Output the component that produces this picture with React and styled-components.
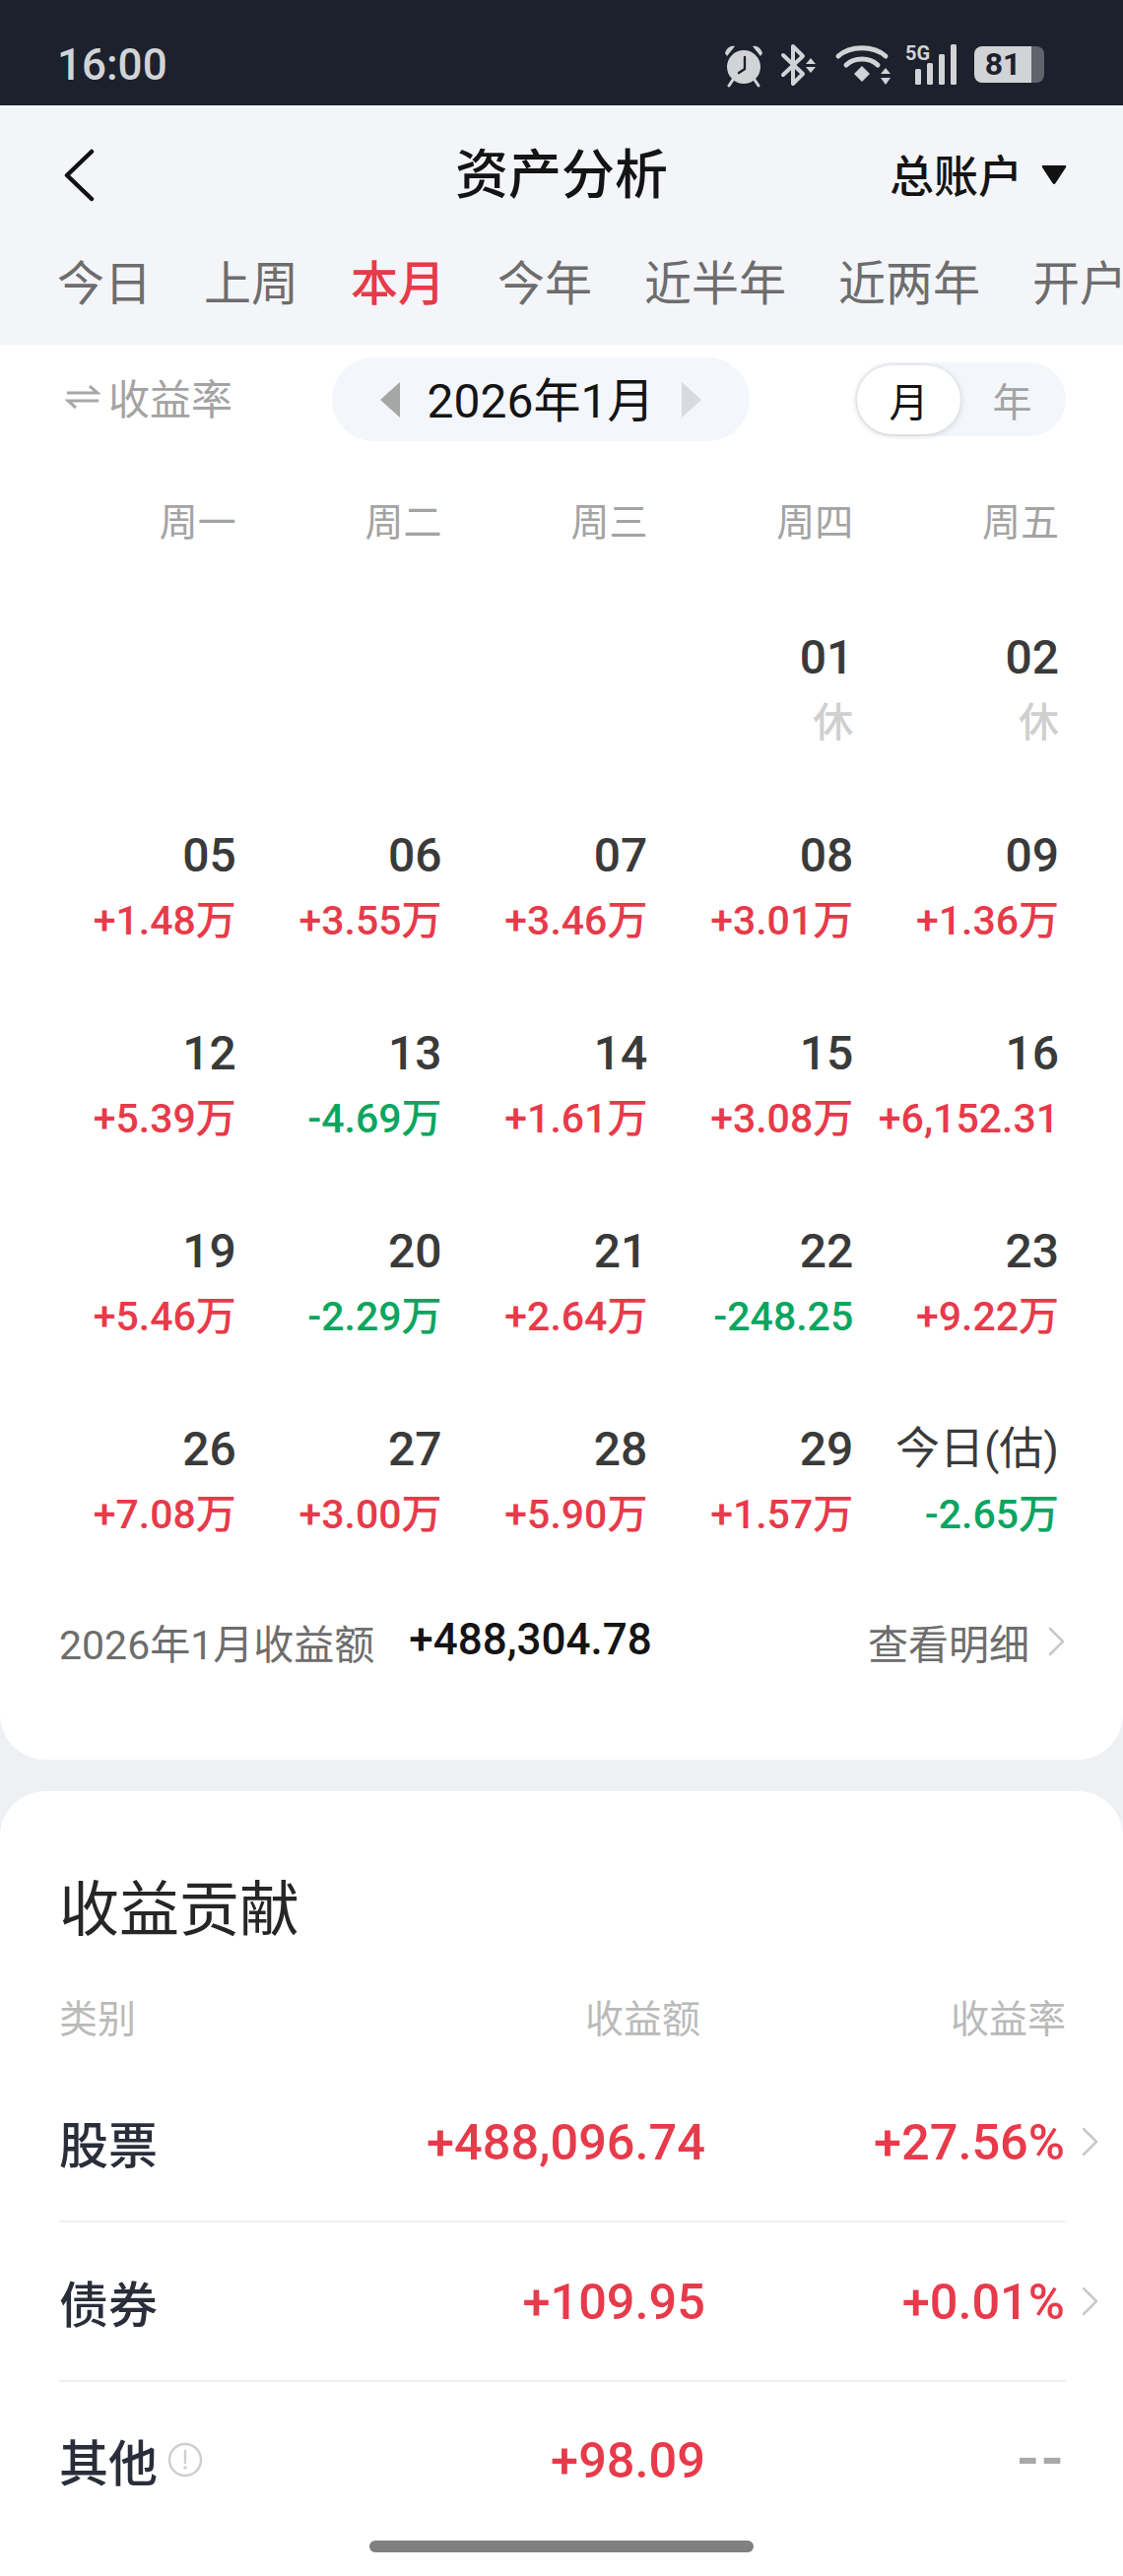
import React from 'react';
import styled, {createGlobalStyle} from 'styled-components';

const RED = '#e73a4a';
const GREEN = '#0ba560';

const GlobalStyle = createGlobalStyle`
  html, body {
    margin: 0;
    padding: 0;
    background: #eff0f4;
  }
  * {
    box-sizing: border-box;
  }
`;

const Page = styled.div`
  position: relative;
  width: 1140px;
  height: 2616px;
  overflow: hidden;
  background: #eff0f4;
  font-family: Roboto, "Noto Sans CJK SC", sans-serif;
`;

const StatusBar = styled.div`
  height: 107px;
  padding: 24px 80px 0 58px;
  background: #1c212d;
  display: flex;
  align-items: center;
  justify-content: space-between;
  color: #d2d3d6;
`;

const Clock = styled.div`
  font-size: 44px;
  font-weight: 500;
`;

const StatusIcons = styled.div`
  display: flex;
  align-items: center;
  gap: 16px;
  svg {
    display: block;
    overflow: visible;
  }
`;

const Battery = styled.div`
  display: flex;
  align-items: center;
  margin-left: 2px;
`;

const BatteryLevel = styled.div`
  width: 58px;
  height: 37px;
  border-radius: 8px 0 0 8px;
  background: #d2d3d6;
  color: #1c212d;
  font-size: 32px;
  font-weight: 700;
  line-height: 37px;
  text-align: center;
`;

const BatteryRest = styled.div`
  width: 13px;
  height: 37px;
  border-radius: 0 8px 8px 0;
  background: #60636b;
`;

const NavArea = styled.div`
  height: 243px;
  background: #f4f5f9;
`;

const TitleBar = styled.div`
  height: 142px;
  position: relative;
  display: flex;
  align-items: center;
  justify-content: space-between;
  padding: 0 56px 0 64px;
`;

const Title = styled.div`
  position: absolute;
  left: 0;
  right: 0;
  top: 32px;
  text-align: center;
  font-size: 54px;
  line-height: 80px;
  font-weight: 500;
  color: #141414;
`;

const Account = styled.div`
  display: flex;
  align-items: center;
  gap: 18px;
  margin-top: -3px;
  font-size: 45px;
  font-weight: 500;
  color: #141414;
`;

const Tabs = styled.div`
  display: flex;
  gap: 53px;
  padding: 2px 0 0 58px;
  white-space: nowrap;
  overflow: hidden;
`;

const Tab = styled.div`
  font-size: 48px;
  line-height: 76px;
  font-weight: ${props => (props.$active ? 500 : 400)};
  color: ${props => (props.$active ? RED : '#6d6d6d')};
`;

const Card = styled.div`
  background: #fff;
  border-radius: 0 0 46px 46px;
  height: 1437px;
`;

const SwitchRow = styled.div`
  display: grid;
  grid-template-columns: 271px 424px 1fr;
  align-items: center;
  padding: 13px 58px 0 66px;
`;

const RateSwitch = styled.div`
  display: flex;
  align-items: center;
  gap: 8px;
  margin-top: -6px;
  font-size: 42px;
  color: #a3a3a3;
`;

const MonthPill = styled.div`
  height: 85px;
  border-radius: 43px;
  background: #f3f6fa;
  display: flex;
  align-items: center;
  justify-content: space-between;
  padding: 0 48px;
  color: #141414;
`;

const MonthText = styled.span`
  margin-top: -6px;
  font-size: 48px;
  font-weight: 400;
`;

const Segment = styled.div`
  justify-self: end;
  width: 214px;
  height: 75px;
  border-radius: 38px;
  background: #f3f6fa;
  display: flex;
  align-items: center;
  padding: 0 2px;
`;

const SegmentItem = styled.div`
  width: 105px;
  height: 70px;
  border-radius: 35px;
  display: flex;
  align-items: center;
  justify-content: center;
  font-size: 40px;
  color: ${props => (props.$active ? '#141414' : '#a3a3a3')};
  background: ${props => (props.$active ? '#fff' : 'transparent')};
  box-shadow: ${props => (props.$active ? '0 1px 6px rgba(0, 0, 0, 0.18)' : 'none')};
`;

const Calendar = styled.div`
  display: grid;
  grid-template-columns: repeat(5, 1fr);
  padding: 0 65px 0 31px;
`;

const WeekLabel = styled.div`
  height: 186px;
  padding-top: 55px;
  text-align: right;
  font-size: 39px;
  line-height: 56px;
  color: #a3a3a3;
`;

const DayCell = styled.div`
  height: 201px;
  text-align: right;
  white-space: nowrap;
`;

const DayNumber = styled.div`
  font-size: ${props => (props.$today ? '45px' : '48px')};
  line-height: 68px;
  font-weight: ${props => (props.$today ? 400 : 500)};
  color: #3a3a3a;
`;

const DayValue = styled.div`
  margin-top: 0;
  font-size: 41px;
  line-height: 64px;
  font-weight: 500;
  color: ${props => props.$color};
`;

const Summary = styled.div`
  display: flex;
  align-items: center;
  padding: 0 58px 0 60px;
  margin-top: -2px;
  height: 60px;
`;

const SummaryLabel = styled.div`
  font-size: 41px;
  color: #6d6d6d;
`;

const SummaryValue = styled.div`
  margin-left: 35px;
  margin-top: -5px;
  font-size: 44px;
  font-weight: 500;
  color: #141414;
`;

const SummaryLink = styled.div`
  margin-left: auto;
  display: flex;
  align-items: center;
  gap: 19px;
  font-size: 41px;
  color: #6d6d6d;
`;

const ContributionCard = styled.div`
  margin-top: 32px;
  height: 797px;
  padding: 0 58px 0 60px;
  background: #fff;
  border-radius: 46px 46px 0 0;
`;

const SectionTitle = styled.div`
  padding: 77px 0 15px;
  font-size: 61px;
  line-height: 88px;
  color: #262626;
`;

const TableRow = styled.div`
  display: grid;
  grid-template-columns: 1fr 400px 365px;
  align-items: center;
  height: ${props => props.$height}px;
  border-bottom: ${props => (props.$line ? '2px solid #f0f0f2' : 'none')};
`;

const HeadCell = styled.div`
  font-size: 39px;
  color: #bababa;
  text-align: ${props => (props.$left ? 'left' : 'right')};
  padding-right: ${props => (props.$inset ? '6px' : '0')};
`;

const RowName = styled.div`
  display: flex;
  align-items: center;
  gap: 10px;
  font-size: 50px;
  font-weight: 500;
  color: #2a2e3b;
`;

const Amount = styled.div`
  position: relative;
  padding-right: 1px;
  text-align: right;
  font-size: 50.5px;
  font-weight: 500;
  color: ${RED};
`;

const NoRate = styled.div`
  text-align: right;
  font-size: 64px;
  line-height: 60px;
  letter-spacing: 3px;
  font-weight: 500;
  color: #a8a8a8;
`;

const RowChevron = styled.span`
  position: absolute;
  right: -34px;
  top: 50%;
  margin-top: -15px;
  line-height: 0;
`;

const HomeBar = styled.div`
  position: absolute;
  left: 375px;
  bottom: 24px;
  width: 390px;
  height: 12px;
  border-radius: 6px;
  background: #808080;
`;

const AlarmIcon = () => (
  <svg width="42" height="42" viewBox="0 0 42 42">
    <circle cx="20" cy="23" r="17" fill="#d2d3d6" />
    <path d="M1 9 C3 3 7 1 11 2 L3 12 Z M39 9 C37 3 33 1 29 2 L37 12 Z" fill="#d2d3d6" />
    <path d="M9 36 L5 42 M31 36 L35 42" stroke="#d2d3d6" strokeWidth="3" strokeLinecap="round" />
    <path d="M21 13 L21 25 L15 29" stroke="#1c212d" strokeWidth="2.4" fill="none" strokeLinecap="round" />
  </svg>
);

const BluetoothIcon = () => (
  <svg width="40" height="42" viewBox="0 0 40 42">
    <path
      d="M2 11 L22 30 L12 40 L12 2 L22 12 L2 31"
      stroke="#d2d3d6"
      strokeWidth="4"
      fill="none"
      strokeLinecap="round"
      strokeLinejoin="round"
    />
    <path d="M29 14 L34 20 L24 20 Z M29 29 L34 23 L24 23 Z" fill="#d2d3d6" transform="translate(1 0)" />
  </svg>
);

const WifiIcon = () => (
  <svg width="54" height="42" viewBox="0 0 54 42">
    <path d="M2 12 C14 1 38 1 50 12" stroke="#d2d3d6" strokeWidth="5" fill="none" strokeLinecap="round" />
    <path d="M10 21 C18 13 34 13 42 21" stroke="#d2d3d6" strokeWidth="5" fill="none" strokeLinecap="round" />
    <path d="M18 30 L26 22 L34 30 L26 38 Z" fill="#d2d3d6" />
    <path d="M50 24 L55 30 L45 30 Z M50 41 L55 34 L45 34 Z" fill="#d2d3d6" />
  </svg>
);

const SignalIcon = () => (
  <svg width="52" height="42" viewBox="0 0 52 42">
    <text x="0" y="16" fontSize="20" fontWeight="700" fontFamily="Roboto, sans-serif" fill="#d2d3d6">
      5G
    </text>
    <rect x="10" y="25" width="6" height="16" rx="1.5" fill="#d2d3d6" />
    <rect x="22" y="19" width="6" height="22" rx="1.5" fill="#d2d3d6" />
    <rect x="34" y="10" width="6" height="31" rx="1.5" fill="#d2d3d6" />
    <rect x="46" y="0" width="6" height="41" rx="1.5" fill="#d2d3d6" />
  </svg>
);

const BackIcon = () => (
  <svg width="32" height="54" viewBox="0 0 32 54">
    <path d="M29 3 L4 27 L29 51" stroke="#111" strokeWidth="4.5" fill="none" strokeLinecap="round" strokeLinejoin="round" />
  </svg>
);

const DownTriangle = () => (
  <svg width="28" height="22" viewBox="0 0 28 22">
    <path d="M3 2 H25 Q27 2 26 4 L15.5 20 Q14 22 12.5 20 L2 4 Q1 2 3 2 Z" fill="#111" />
  </svg>
);

const SwapIcon = () => (
  <svg width="36" height="28" viewBox="0 0 36 28">
    <path d="M2 10 H33 L25 3" stroke="#a8a8a8" strokeWidth="3" fill="none" />
    <path d="M34 18 H3 L11 25" stroke="#a8a8a8" strokeWidth="3" fill="none" />
  </svg>
);

const PillArrow = ({left}) => (
  <svg width="22" height="36" viewBox="0 0 22 36">
    {left ? <path d="M21 0 V36 L1 18 Z" fill="#a6a6a6" /> : <path d="M1 0 V36 L21 18 Z" fill="#d9dade" />}
  </svg>
);

const Chevron = () => (
  <svg width="18" height="30" viewBox="0 0 18 30">
    <path d="M2 2 L15 15 L2 28" stroke="#c8c8c8" strokeWidth="2.5" fill="none" strokeLinecap="round" strokeLinejoin="round" />
  </svg>
);

const InfoIcon = () => (
  <svg width="36" height="36" viewBox="0 0 36 36">
    <circle cx="18" cy="18" r="16" stroke="#cfcfcf" strokeWidth="2.5" fill="none" />
    <path d="M18 9 V21" stroke="#cfcfcf" strokeWidth="2.5" strokeLinecap="round" />
    <circle cx="18" cy="26" r="1.8" fill="#cfcfcf" />
  </svg>
);

const TABS = ['今日', '上周', '本月', '今年', '近半年', '近两年', '开户'];
const WEEK = ['周一', '周二', '周三', '周四', '周五'];

const DAYS = [
  [null, null],
  [null, null],
  [null, null],
  ['01', '休', '#cfcfcf'],
  ['02', '休', '#cfcfcf'],
  ['05', '+1.48万', RED],
  ['06', '+3.55万', RED],
  ['07', '+3.46万', RED],
  ['08', '+3.01万', RED],
  ['09', '+1.36万', RED],
  ['12', '+5.39万', RED],
  ['13', '-4.69万', GREEN],
  ['14', '+1.61万', RED],
  ['15', '+3.08万', RED],
  ['16', '+6,152.31', RED],
  ['19', '+5.46万', RED],
  ['20', '-2.29万', GREEN],
  ['21', '+2.64万', RED],
  ['22', '-248.25', GREEN],
  ['23', '+9.22万', RED],
  ['26', '+7.08万', RED],
  ['27', '+3.00万', RED],
  ['28', '+5.90万', RED],
  ['29', '+1.57万', RED],
  ['今日(估)', '-2.65万', GREEN]
];

const App = () => (
  <Page>
    <GlobalStyle />
    <StatusBar>
      <Clock>16:00</Clock>
      <StatusIcons>
        <AlarmIcon />
        <BluetoothIcon />
        <WifiIcon />
        <SignalIcon />
        <Battery>
          <BatteryLevel>81</BatteryLevel>
          <BatteryRest />
        </Battery>
      </StatusIcons>
    </StatusBar>

    <NavArea>
      <TitleBar>
        <BackIcon />
        <Title>资产分析</Title>
        <Account>
          总账户
          <DownTriangle />
        </Account>
      </TitleBar>
      <Tabs>
        {TABS.map(tab => (
          <Tab key={tab} $active={tab === '本月'}>
            {tab}
          </Tab>
        ))}
      </Tabs>
    </NavArea>

    <Card>
      <SwitchRow>
        <RateSwitch>
          <SwapIcon />
          收益率
        </RateSwitch>
        <MonthPill>
          <PillArrow left />
          <MonthText>2026年1月</MonthText>
          <PillArrow />
        </MonthPill>
        <Segment>
          <SegmentItem $active>月</SegmentItem>
          <SegmentItem>年</SegmentItem>
        </Segment>
      </SwitchRow>

      <Calendar>
        {WEEK.map(day => (
          <WeekLabel key={day}>{day}</WeekLabel>
        ))}
        {DAYS.map(([day, value, color], i) => (
          <DayCell key={i}>
            {day && <DayNumber $today={day.length > 2}>{day}</DayNumber>}
            {value && <DayValue $color={color}>{value}</DayValue>}
          </DayCell>
        ))}
      </Calendar>

      <Summary>
        <SummaryLabel>2026年1月收益额</SummaryLabel>
        <SummaryValue>+488,304.78</SummaryValue>
        <SummaryLink>
          查看明细
          <Chevron />
        </SummaryLink>
      </Summary>
    </Card>

    <ContributionCard>
      <SectionTitle>收益贡献</SectionTitle>
      <TableRow $height={96}>
        <HeadCell $left>类别</HeadCell>
        <HeadCell $inset>收益额</HeadCell>
        <HeadCell>收益率</HeadCell>
      </TableRow>
      <TableRow $height={162} $line>
        <RowName>股票</RowName>
        <Amount>+488,096.74</Amount>
        <Amount>
          +27.56%
          <RowChevron>
            <Chevron />
          </RowChevron>
        </Amount>
      </TableRow>
      <TableRow $height={162} $line>
        <RowName>债券</RowName>
        <Amount>+109.95</Amount>
        <Amount>
          +0.01%
          <RowChevron>
            <Chevron />
          </RowChevron>
        </Amount>
      </TableRow>
      <TableRow $height={158}>
        <RowName>
          其他
          <InfoIcon />
        </RowName>
        <Amount>+98.09</Amount>
        <NoRate>--</NoRate>
      </TableRow>
    </ContributionCard>

    <HomeBar />
  </Page>
);

export default App;
